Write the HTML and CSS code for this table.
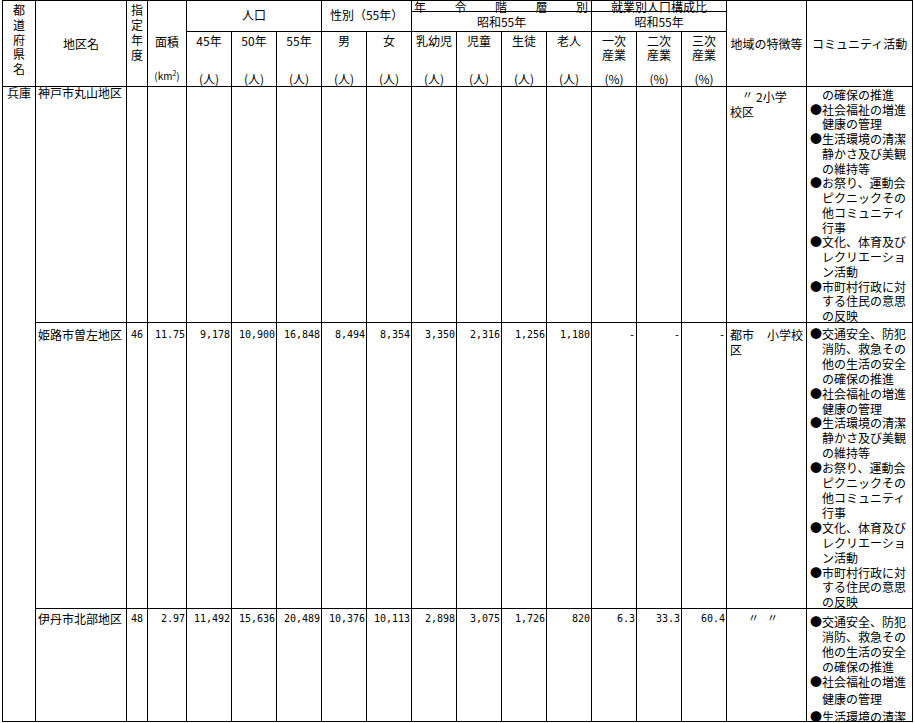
FILE: index.html
```html
<!DOCTYPE html>
<html lang="ja">
<head>
<meta charset="utf-8">
<title>コミュニティ地区一覧</title>
<link rel="stylesheet" href="styles.css">
</head>
<body>
<table class="t">
<colgroup>
<col class="c-pref"><col class="c-name"><col class="c-year"><col class="c-area">
<col class="c-n"><col class="c-n"><col class="c-n"><col class="c-n"><col class="c-n"><col class="c-n">
<col class="c-n"><col class="c-n"><col class="c-n"><col class="c-n"><col class="c-n"><col class="c-n">
<col class="c-feat"><col class="c-act">
</colgroup>
<thead>
<tr class="ra">
<th rowspan="3" class="vt pref">都<br>道<br>府<br>県<br>名</th>
<th rowspan="3" class="mid">地区名</th>
<th rowspan="3" class="vt yr">指<br>定<br>年<br>度</th>
<th rowspan="3" class="topc"><div class="area-h"><span>面積</span><span class="km">(km<sup>2</sup>)</span></div></th>
<th colspan="3" rowspan="2" class="grp">人口</th>
<th colspan="2" rowspan="2" class="grp">性別（55年）</th>
<th colspan="4" class="thin"><div class="spread"><span>年</span><span>令</span><span>階</span><span>層</span><span>別</span></div></th>
<th colspan="3" class="thin">就業別人口構成比</th>
<th rowspan="3" class="mid">地域の特徴等</th>
<th rowspan="3" class="mid">コミュニティ活動</th>
</tr>
<tr class="rb">
<th colspan="4" class="sub">昭和55年</th>
<th colspan="3" class="sub">昭和55年</th>
</tr>
<tr class="rc">
<th class="topc"><div class="hc"><span>45年</span><span></span><span>(人)</span></div></th>
<th class="topc"><div class="hc"><span>50年</span><span></span><span>(人)</span></div></th>
<th class="topc"><div class="hc"><span>55年</span><span></span><span>(人)</span></div></th>
<th class="topc"><div class="hc"><span>男</span><span></span><span>(人)</span></div></th>
<th class="topc"><div class="hc"><span>女</span><span></span><span>(人)</span></div></th>
<th class="topc"><div class="hc"><span>乳幼児</span><span></span><span>(人)</span></div></th>
<th class="topc"><div class="hc"><span>児童</span><span></span><span>(人)</span></div></th>
<th class="topc"><div class="hc"><span>生徒</span><span></span><span>(人)</span></div></th>
<th class="topc"><div class="hc"><span>老人</span><span></span><span>(人)</span></div></th>
<th class="topc"><div class="hc"><span>一次</span><span>産業</span><span>(%)</span></div></th>
<th class="topc"><div class="hc"><span>二次</span><span>産業</span><span>(%)</span></div></th>
<th class="topc"><div class="hc"><span>三次</span><span>産業</span><span>(%)</span></div></th>
</tr>
</thead>
<tbody>
<tr class="r1">
<td rowspan="3" class="pref-d">兵庫</td>
<td class="name">神戸市丸山地区</td>
<td></td><td></td>
<td></td><td></td><td></td><td></td><td></td><td></td>
<td></td><td></td><td></td><td></td><td></td><td></td>
<td class="feat"><div class="ln">　<span class="ditto">〃</span><span class="g2">2</span>小学</div><div class="ln">校区</div></td>
<td class="act"><div class="actw a1">
<div>　の確保の推進</div>
<div>●社会福祉の増進</div>
<div>　健康の管理</div>
<div>●生活環境の清潔</div>
<div>　静かさ及び美観</div>
<div>　の維持等</div>
<div>●お祭り、運動会</div>
<div>　ピクニックその</div>
<div>　他コミュニティ</div>
<div>　行事</div>
<div>●文化、体育及び</div>
<div>　レクリエーショ</div>
<div>　ン活動</div>
<div>●市町村行政に対</div>
<div>　する住民の意思</div>
<div>　の反映</div>
</div></td>
</tr>
<tr class="r2">
<td class="name">姫路市曽左地区</td>
<td class="yr-d">46</td>
<td class="n">11.75</td>
<td class="n">9,178</td>
<td class="n">10,900</td>
<td class="n">16,848</td>
<td class="n">8,494</td>
<td class="n">8,354</td>
<td class="n">3,350</td>
<td class="n">2,316</td>
<td class="n">1,256</td>
<td class="n">1,180</td>
<td class="n">-</td>
<td class="n">-</td>
<td class="n">-</td>
<td class="feat"><div class="ln">都市<span class="gap"></span>小学校</div><div class="ln">区</div></td>
<td class="act"><div class="actw a2">
<div>●交通安全、防犯</div>
<div>　消防、救急その</div>
<div>　他の生活の安全</div>
<div>　の確保の推進</div>
<div>●社会福祉の増進</div>
<div>　健康の管理</div>
<div>●生活環境の清潔</div>
<div>　静かさ及び美観</div>
<div>　の維持等</div>
<div>●お祭り、運動会</div>
<div>　ピクニックその</div>
<div>　他コミュニティ</div>
<div>　行事</div>
<div>●文化、体育及び</div>
<div>　レクリエーショ</div>
<div>　ン活動</div>
<div>●市町村行政に対</div>
<div>　する住民の意思</div>
<div>　の反映</div>
</div></td>
</tr>
<tr class="r3">
<td class="name">伊丹市北部地区</td>
<td class="yr-d">48</td>
<td class="n">2.97</td>
<td class="n">11,492</td>
<td class="n">15,636</td>
<td class="n">20,489</td>
<td class="n">10,376</td>
<td class="n">10,113</td>
<td class="n">2,898</td>
<td class="n">3,075</td>
<td class="n">1,726</td>
<td class="n">820</td>
<td class="n">6.3</td>
<td class="n">33.3</td>
<td class="n">60.4</td>
<td class="feat"><div class="ln"><span class="ditto d1">〃</span><span class="ditto d2">〃</span></div></td>
<td class="act"><div class="actw a3">
<div>●交通安全、防犯</div>
<div>　消防、救急その</div>
<div>　他の生活の安全</div>
<div>　の確保の推進</div>
<div>●社会福祉の増進</div>
<div class="sp2">　健康の管理</div>
<div class="sp3">●生活環境の清潔</div>
</div></td>
</tr>
</tbody>
</table>
</body>
</html>
```
FILE: styles.css
```css
html, body {
  margin: 0;
  padding: 0;
  background: #fff;
}
body {
  font-family: "Noto Sans CJK JP", "Noto Sans", sans-serif;
  font-size: 12px;
  color: #000;
}
.t {
  margin-left: 2px;
  border-collapse: separate;
  border-spacing: 0;
  table-layout: fixed;
  width: 911px;
  border-left: 1px solid #000;
  border-top: 1px solid #000;
}
.t th, .t td {
  border-right: 1px solid #000;
  border-bottom: 1px solid #000;
  padding: 0;
  box-sizing: border-box;
  font-weight: normal;
  white-space: nowrap;
  overflow: visible;
  line-height: 12px;
}
col.c-pref { width: 33px; }
col.c-name { width: 91px; }
col.c-year { width: 21px; }
col.c-area { width: 39px; }
col.c-n { width: 45px; }
col.c-feat { width: 80px; }
col.c-act { width: 106px; }

tr.ra { height: 11px; }
tr.rb { height: 20px; }
tr.rc { height: 55px; }
tr.r1 { height: 236px; }
tr.r2 { height: 286px; }
tr.r3 { height: 113px; }

/* header */
.t th.vt {
  vertical-align: top;
  text-align: center;
}
.t th.pref {
  line-height: 14.75px;
  padding-top: 2px;
}
.t th.yr {
  line-height: 15px;
  padding-top: 1px;
}
.t th.mid {
  vertical-align: middle;
  text-align: center;
}
.t th.grp {
  vertical-align: middle;
  text-align: center;
  padding-bottom: 3px;
}
.t th.thin {
  vertical-align: top;
  text-align: center;
  line-height: 9px;
  padding-top: 1px;
  height: 11px;
}
.spread {
  display: flex;
  justify-content: space-between;
  padding: 0 3px 0 2px;
}
.t th.sub {
  vertical-align: middle;
  text-align: center;
  line-height: 19px;
}
.t th.topc {
  vertical-align: top;
  text-align: center;
}
.area-h {
  display: flex;
  flex-direction: column;
  justify-content: space-between;
  align-items: center;
  height: 85px;
  padding: 34px 0 3px;
  box-sizing: border-box;
  line-height: 14px;
}
.km {
  font-size: 10px;
}
.km sup {
  font-size: 7px;
  line-height: 0;
  vertical-align: 4px;
}
.hc {
  display: flex;
  flex-direction: column;
  height: 54px;
  padding-top: 2px;
  box-sizing: border-box;
  line-height: 14px;
}
.hc span {
  height: 14px;
}
.hc span:last-child {
  margin-top: auto;
}

/* body */
.t td {
  vertical-align: top;
}
.t td.pref-d {
  text-align: center;
}
.t td.name {
  padding-left: 2px;
}
.r2 td, .r3 td {
  line-height: 15px;
}
.r2 td.name, .r2 td.yr-d, .r2 td.n, .r2 td.feat {
  padding-top: 4px;
}
.r3 td.name, .r3 td.yr-d, .r3 td.n {
  padding-top: 2px;
}
.r3 td.feat {
  padding-top: 1px;
}
.t td.yr-d {
  text-align: center;
  font-family: "DejaVu Sans Mono", monospace;
  font-size: 10px;
}
.t td.n {
  text-align: right;
  padding-right: 1px;
  font-family: "DejaVu Sans Mono", monospace;
  font-size: 10px;
}
.t td.feat {
  padding-left: 3px;
}
.r1 td.feat .ln {
  line-height: 15px;
}
.ditto {
  display: inline-block;
  width: 12px;
  vertical-align: 3px;
  font-size: 11px;
}
.g2 {
  margin-left: 2px;
}
.gap {
  display: inline-block;
  width: 13px;
}
.d1 {
  margin-left: 18px;
}
.d2 {
  margin-left: 7px;
}
.t td.act {
  padding-left: 3px;
}
.actw {
  overflow: visible;
}
.actw > div {
  white-space: nowrap;
}
.a1 {
  height: 235px;
  padding-top: 1px;
  box-sizing: border-box;
  line-height: 14.73px;
}
.a2 {
  height: 285px;
  padding-top: 4px;
  box-sizing: border-box;
  line-height: 14.9px;
}
.a3 {
  height: 112px;
  padding-top: 5px;
  box-sizing: border-box;
  line-height: 15px;
}
.sp2 { margin-top: 2px; }
.sp3 { margin-top: 3px; }
```
